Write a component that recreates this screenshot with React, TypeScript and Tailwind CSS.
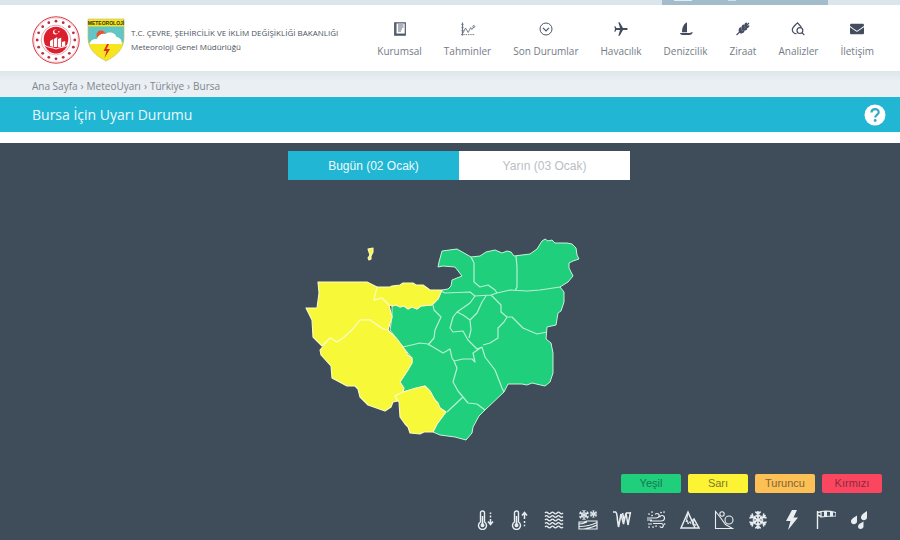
import React, { useState } from "react";
import { FaEnvelope } from "react-icons/fa";
import { MdAirplanemodeActive } from "react-icons/md";

const navIcon = "h-4 w-4";

function KurumsalIcon() {
  return (
    <svg viewBox="0 0 16 16" className={navIcon} fill="none" stroke="#4d5768">
      <path d="M2.700 1.800h10.600v12.400H2.700z" strokeWidth="1.200" />
      <path d="M3.800 2v12" strokeWidth="1.400" />
      <path d="M6 4h5.500M6 6h5.500M6 8h4M6 10h3" strokeWidth="0.900" />
      <path d="M3 13.300h10" strokeWidth="1.500" />
    </svg>
  );
}
function TahminIcon() {
  return (
    <svg viewBox="0 0 16 16" className={navIcon} fill="none" stroke="#6a7380" strokeWidth="0.900">
      <path d="M2.500 1.500v13" strokeWidth="1.200" />
      <path d="M1 13.600h14" strokeDasharray="1.500 0.800" />
      <path d="M1.500 3.500h2M1.500 6.500h2M1.500 9.500h2" />
      <path d="M3 12l2.500-5 2.700 4.500 2.500-5 1.200 2 1.800-2.500" />
      <circle cx="13.800" cy="5.500" r="1" />
    </svg>
  );
}
function DurumIcon() {
  return (
    <svg viewBox="0 0 16 16" className={navIcon} fill="none" stroke="#4d5768">
      <circle cx="8" cy="8" r="6" strokeWidth="1" />
      <path d="M5 6.800l3 3 3-3" strokeWidth="1.200" />
    </svg>
  );
}
function SailIcon() {
  return (
    <svg viewBox="0 0 16 16" className={navIcon} fill="#434d5e">
      <path d="M9 1.300v9.900H4C4 6.500 5.800 2.800 9 1.300z" />
      <path d="M1.800 12h9c1.200 0 2.200-.2 3.200-1l.8.500c-.8 1.700-2 2.500-3.800 2.500H4.500c-1.200 0-2.100-.7-2.700-2z" />
    </svg>
  );
}
function WheatIcon() {
  return (
    <svg viewBox="0 0 16 16" className={navIcon} fill="#434d5e">
      <path d="M1.500 14L14 2" stroke="#434d5e" strokeWidth="1.100" />
      <g>
        <ellipse cx="5" cy="8.600" rx="1.300" ry="2.500" transform="rotate(15 5 8.600)" />
        <ellipse cx="7.800" cy="5.900" rx="1.300" ry="2.500" transform="rotate(20 7.800 5.900)" />
        <ellipse cx="10.600" cy="3.600" rx="1.200" ry="2.300" transform="rotate(25 10.600 3.600)" />
        <ellipse cx="7" cy="11" rx="2.500" ry="1.300" transform="rotate(-15 7 11)" />
        <ellipse cx="9.800" cy="8.400" rx="2.500" ry="1.300" transform="rotate(-20 9.800 8.400)" />
        <ellipse cx="12.300" cy="5.800" rx="2.300" ry="1.200" transform="rotate(-25 12.300 5.800)" />
      </g>
    </svg>
  );
}
function AnalizIcon() {
  return (
    <svg viewBox="0 0 16 16" className={navIcon} fill="none" stroke="#434d5e" strokeWidth="1.200">
      <path d="M6.500 12.700C4 12.700 2.300 11 2.300 8.800 2.300 6 5 4.500 7.500 1.800c1.700 2 3.200 3.200 4 4.700" />
      <circle cx="9.900" cy="9.600" r="2.900" />
      <path d="M12 11.700l2.300 2.500" />
    </svg>
  );
}

const nav = [
  { label: "Kurumsal", icon: <KurumsalIcon /> },
  { label: "Tahminler", icon: <TahminIcon /> },
  { label: "Son Durumlar", icon: <DurumIcon /> },
  { label: "Havacılık", icon: <MdAirplanemodeActive className="h-4 w-4 rotate-90 text-[#434d5e]" /> },
  { label: "Denizcilik", icon: <SailIcon /> },
  { label: "Ziraat", icon: <WheatIcon /> },
  { label: "Analizler", icon: <AnalizIcon /> },
  { label: "İletişim", icon: <FaEnvelope className="h-4 w-3.5 text-[#434d5e]" /> },
];

const crumbs = ["Ana Sayfa", "MeteoUyarı", "Türkiye", "Bursa"];

const levels = [
  { label: "Yeşil", style: "bg-[#20cf7c] text-[#17774f]" },
  { label: "Sarı", style: "bg-[#fbf334] text-[#7d7a2c]" },
  { label: "Turuncu", style: "bg-[#fdc055] text-[#806537]" },
  { label: "Kırmızı", style: "bg-[#fb4660] text-[#8b2a40]" },
];

function MinistrySeal() {
  const stars = Array.from({ length: 16 }, (_, i) => {
    const a = (i * Math.PI) / 8;
    return { x: 24 + 18.800 * Math.sin(a), y: 24 - 18.800 * Math.cos(a) };
  });
  return (
    <svg viewBox="0 0 48 48" className="h-12 w-12" role="img" aria-label="Bakanlık arması">
      <circle cx="24" cy="24" r="23.200" fill="#fff" stroke="#d8323e" strokeWidth="1" />
      <circle cx="24" cy="24" r="22" fill="none" stroke="#e9a5aa" strokeWidth="0.500" />
      {stars.map((s, i) => (
        <circle key={i} cx={s.x} cy={s.y} r="1.400" fill="#b9303f" />
      ))}
      <circle cx="24" cy="24" r="14.800" fill="#fff" stroke="#e58088" strokeWidth="0.700" />
      <circle cx="24" cy="23" r="12.300" fill="#dc1f2d" />
      <circle cx="23.500" cy="16" r="2.500" fill="#fff" />
      <circle cx="24.400" cy="15.600" r="2.100" fill="#dc1f2d" />
      <circle cx="26.800" cy="15.800" r="0.700" fill="#fff" />
      <path d="M18 25l3.200-2v8L18 30zM22 23l3.200-2v10H22zM26 23l3.200-1.500V31H26zM30 26l3.200-1v5L30 31z" fill="#fff" />
      <path d="M12 29c4 3 8 2 12 4 4-2 8-1 12-4-3 7-8 9-12 9s-9-2-12-9z" fill="#dc1f2d" stroke="#fff" strokeWidth="0.900" />
    </svg>
  );
}

function MeteorologyShield() {
  return (
    <svg viewBox="0 0 38 44" className="h-11 w-[38px]" role="img" aria-label="Meteoroloji arması">
      <defs>
        <clipPath id="shield">
          <path d="M1 1h36v19c0 11-8 18-18 23C9 38 1 31 1 20z" />
        </clipPath>
      </defs>
      <g clipPath="url(#shield)">
        <rect width="38" height="44" fill="#f7e520" />
        <rect y="8.500" width="38" height="16" fill="#62c5c6" />
        <circle cx="14" cy="17" r="4.500" fill="#e8542c" />
        <path d="M3 26c0-4 4-5.500 7-5 1-4 5-6 8.500-5 4-3 10-1 11 3 4 .5 6 4 5 7z" fill="#fff" />
      </g>
      <path d="M1 1h36v19c0 11-8 18-18 23C9 38 1 31 1 20z" fill="none" stroke="#c9c06a" strokeWidth="0.700" />
      <path d="M20 26l-3.500 7h3L17.500 40l5.500-9h-3.500l2.500-5z" fill="#d92d22" />
      <text x="19" y="7" textAnchor="middle" fontSize="5" fontWeight="700" fill="#303018" fontFamily="'Liberation Sans', sans-serif">METEOROLOJİ</text>
    </svg>
  );
}

const yellowAreas = [
  "M318 282L367 282 377 287 374 300 382 298 389 305 392 317 388 330 383 329 370 320 360 320 352 330 343 338 337 342 330 338 322 346 313 337 312 320 306 308 317 308 319 293z",
  "M320 350L330 338 337 342 343 338 352 330 360 320 370 320 383 329 388 330 397 339 403 347 408 355 412 358 412 363 408 370 400 382 404 388 403 392 395 396 398 401 393 402 391 407 385 411 368 405 360 397 358 389 355 386 347 386 332 378 331 366 321 355z",
  "M395 396L403 392 416 388 425 386 430 391 435 400 438 403 440 408 446 412 437 424 433 432 424 432 420 434 410 433 408 427 405 424 400 417 399 402z",
  "M377 287L390 287 392 286 400 285 403 283 413 283 416 285 423 285 430 290 442 290 438 299 432 305 421 306 417 309 412 307 408 309 404 306 400 307 396 305 392 306 389 305 382 298 374 300z",
  "M368 249L373 248 373 252 371 256 371 259 369 260 368 258 370 255z",
];
const greenArea =
  "M442 290L448 289 451 286 452 280 462 276 455 267 443 266 438 267 439 262 442 251 457 249 471 257 480 256 486 252 495 250 502 253 507 251 511 252 514 256 530 254 537 249 542 241 545 239 548 241 552 240 555 243 567 243 572 244 576 248 577 255 579 259 573 261 569 263 569 268 573 276 568 282 560 287 564 292 564 302 561 311 558 313 556 325 547 327 546 339 551 343 553 353 553 373 550 382 545 386 532 383 527 385 522 384 508 384 504 392 485 410 479 416 473 427 472 433 466 440 455 437 440 435 433 432 437 424 446 412 440 408 435 400 430 391 425 386 403 392 400 382 412 363 412 358 403 347 390 330 392 317 392 306 396 305 400 307 404 306 408 309 412 307 417 309 421 306 432 305 438 299z";
const borders =
  "M471 257L474 263 474 282 480 287 488 285 495 290 497 293M516 256L517 267 517 287 515 291M441 291L445 293 470 292 475 296 491 295 497 293 510 290 527 291 540 290 560 287M475 296L470 303 457 312 453 317 450 328 453 332 463 331 468 340 477 349 482 347M457 312L463 315 470 320 471 330 469 338M470 320L477 313 482 302 486 296M491 295L501 305 501 312 507 317 512 317 523 328 537 334 547 332M507 317L504 322 498 328 498 338 490 343 483 345M433 305L434 310 441 317 435 330 434 338 428 345M403 347L420 343 428 344 443 353 450 349 452 358 454 361 463 359 472 359 475 362 473 353 482 347M454 361L457 368 453 382 458 391 463 397 447 412M463 397L468 403 477 404 485 410M482 347L485 357 495 370 502 388 504 392";

function BursaMap() {
  return (
    <svg viewBox="305 235 290 210" className="h-[210px] w-[290px]" role="img" aria-label="Bursa uyarı haritası" strokeLinejoin="round">
      <path d={greenArea} fill="#20cf7c" stroke="#c5f4dc" strokeWidth="1" />
      <path d={borders} fill="none" stroke="#b5f0d2" strokeWidth="1.200" />
      {yellowAreas.map((d) => (
        <path key={d} d={d} fill="#f7f838" stroke="#fdfcc0" strokeWidth="1.100" />
      ))}
    </svg>
  );
}

function Thermometer({ up }: { up?: boolean }) {
  return (
    <g>
      <path d="M4.500 12V3a2 2 0 0 1 4 0v9a4 4 0 1 1-4 0z" />
      <path d="M6.500 6v8" strokeWidth="1.600" />
      <circle cx="6.500" cy="15.300" r="1.300" fill="currentColor" />
      {up ? (
        <path d="M14.500 4v5M14.500 11v2M14.500 14.800v1.500M12 5.500L14.500 2.500 17 5.500" strokeWidth="1.500" />
      ) : (
        <path d="M14.500 2.500V4M14.500 5.500v2M14.500 9v5M12 11.500l2.500 3 2.500-3" strokeWidth="1.500" />
      )}
    </g>
  );
}

const snowArm = "M0 0V-8.500M-2.500-8L0-5.500 2.500-8M-2-4.700L0-2.700 2-4.700";

function Flake({ x, y, scale, width }: { x: number; y: number; scale: number; width: number }) {
  return (
    <g transform={`translate(${x} ${y}) scale(${scale})`} strokeWidth={width}>
      {[0, 60, 120, 180, 240, 300].map((a) => (
        <path key={a} d={snowArm} transform={`rotate(${a})`} />
      ))}
    </g>
  );
}

const hazards: { name: string; art: React.ReactNode }[] = [
  { name: "Soğuk", art: <Thermometer /> },
  { name: "Sıcak", art: <Thermometer up /> },
  {
    name: "Sel",
    art: (
      <g strokeWidth="1.300">
        {[3, 6.500, 10, 13.500, 17].map((y) => (
          <path key={y} d={`M1 ${y}q1.500-1.800 3 0t3 0 3 0 3 0 3 0 3 0`} />
        ))}
      </g>
    ),
  },
  {
    name: "Zirai don",
    art: (
      <g strokeWidth="1.200">
        <Flake x={6} y={5} scale={0.600} width={1.600} />
        <Flake x={15.500} y={4} scale={0.430} width={1.900} />
        <path d="M1 12h5l3-1h10v8H1zM1 16.500c7 0 12-1 18-4M6 19c5-1 9-2 13-4M1 14c3 0 5-.5 8-2" />
      </g>
    ),
  },
  {
    name: "Buzlanma",
    art: (
      <g strokeWidth="1.600">
        <path d="M1 2h2.500q1.500.5 2 8L6.500 17 9 4" />
        <path d="M9 4l2.500 10L14 3l2 12L18.500 2M10.500 3l2 8M14 3h5" strokeWidth="1.500" />
      </g>
    ),
  },
  {
    name: "Toz",
    art: (
      <g strokeWidth="1.200">
        <path d="M1 8h9c4 0 4-4.500 1-4.500-1 0-1.500.5-1.700 1M4 11h11c4.500 0 4.500-5.500 1-5.500-1.300 0-2 .8-2 1.800M1 10h5M7 13.500h8c3 0 3 4 .5 4-1 0-1.500-.5-1.500-1.200M2 14h4" />
        <path d="M3 4h.1M6 2h.1M6 5.500h.1M15 2.500h.1M18 2h.1M3 17h.1M7 17h.1M10 16h.1M18.500 14h.1" strokeWidth="1.700" strokeLinecap="round" />
      </g>
    ),
  },
  {
    name: "Çığ",
    art: (
      <g strokeWidth="1.500">
        <path d="M1 18L8 2l4 9 2-2 5 9zM12 11l3 7" />
        <path d="M8 4L6 12l1.500-1.500L8 14l2-2.500 1 2.500M14 10l-1 5 2-1 1 2" strokeWidth="1" />
      </g>
    ),
  },
  {
    name: "Toprak kayması",
    art: (
      <g strokeWidth="1.100">
        <path d="M1.500 1.500V18.500H18.500L11.500 14.500 6 7z" />
        <circle cx="8" cy="4" r="2.200" />
        <circle cx="15" cy="10" r="4" />
      </g>
    ),
  },
  { name: "Kar", art: <Flake x={10} y={10} scale={1.050} width={1.500} /> },
  { name: "Gök gürültülü sağanak", art: <path d="M10 0L4 11h4.500L6 20 16 7.500h-4.500L15 0z" fill="currentColor" stroke="none" /> },
  {
    name: "Rüzgâr",
    art: (
      <g>
        <path d="M1.500 1v18M2 2.500l3-.8M2 5l3 1.500" strokeWidth="1.400" />
        <path d="M5 1.500q7-1 15 1v3.500q-8 0-15 1z" strokeWidth="1.200" />
        <path d="M8 1v6l3-.5V1zM14 1.500v5l3-.2V2z" fill="currentColor" stroke="none" />
      </g>
    ),
  },
  {
    name: "Yağmur",
    art: (
      <g fill="currentColor" stroke="none">
        <path d="M17 1c-3 2-6 3.800-6 6.500 0 3.700 5.700 3.700 6 0z" />
        <path d="M7 5.500C4 7.500 1 9 1 11.500c0 3.500 5.700 3.700 6 0z" />
        <path d="M13.500 11.500c-3 1.800-5.500 2.800-5.500 5 0 3.500 5.500 3.200 5.500 0z" />
      </g>
    ),
  },
];

export default function App() {
  const [day, setDay] = useState(0);
  const tabs = ["Bugün (02 Ocak)", "Yarın (03 Ocak)"];
  return (
    <div className="flex min-h-screen flex-col bg-[#3f4c5a] font-['Open_Sans','Noto_Sans',sans-serif]">
      <div className="flex h-[5px] justify-end bg-[#dbe6ec] pr-[72px]">
        <div className="flex w-[166px] gap-9 bg-[#a2bccb] pl-3">
          <span className="h-px w-[18px] bg-[#e4ecf0]" />
          <span className="h-px w-2 bg-[#d2dfe6]" />
        </div>
      </div>
      <header className="flex h-[66px] items-center justify-between bg-white pt-1 pr-[26px] pl-8">
        <a href="#" className="flex items-center text-[#4c5462]">
          <MinistrySeal />
          <span className="ml-[7px]"><MeteorologyShield /></span>
          <span className="ml-[6px] flex flex-col text-[8px] leading-[14px] whitespace-nowrap">
            <span>T.C. ÇEVRE, ŞEHİRCİLİK VE İKLİM DEĞİŞİKLİĞİ BAKANLIĞI</span>
            <span>Meteoroloji Genel Müdürlüğü</span>
          </span>
        </a>
        <nav className="flex gap-[22px]">
          {nav.map((n) => (
            <a key={n.label} href="#" className="flex flex-col items-center gap-[6px] text-[10px] leading-4 whitespace-nowrap text-[#737b86]">
              {n.icon}
              {n.label}
            </a>
          ))}
        </nav>
      </header>
      <nav className="h-[26px] bg-linear-to-b from-[#dfe6eb] to-[#e9eff3] to-40% pt-[7px] pl-8" aria-label="Sayfa yolu">
        <ol className="flex text-[10px] leading-4 text-[#7f868f]">
          {crumbs.map((c, i) => (
            <li key={c}>
              {i > 0 && <span className="px-[3px]">›</span>}
              <a href="#">{c}</a>
            </li>
          ))}
        </ol>
      </nav>
      <div className="flex h-[35px] items-center justify-between bg-[#20b6d4] pr-[14px] pl-8">
        <h1 className="text-[14px] leading-5 text-[#e9fafd]">Bursa İçin Uyarı Durumu</h1>
        <button type="button" aria-label="Yardım" className="h-[22px] w-[22px]">
          <svg viewBox="0 0 22 22" className="h-full w-full">
            <circle cx="11" cy="11" r="10.500" fill="#fff" />
            <path d="M7.500 8.500c0-4.500 7.200-4.300 7.200-.3 0 2.600-3.500 2.700-3.500 5.300" fill="none" stroke="#35a9c2" strokeWidth="2.200" />
            <circle cx="11.200" cy="16.500" r="1.400" fill="#35a9c2" />
          </svg>
        </button>
      </div>
      <div className="h-[11px] bg-white" />
      <main className="flex flex-col pt-2 font-['Liberation_Sans',Arial,sans-serif]">
        <div className="flex justify-center pl-[18px]">
          <div role="tablist" className="grid w-[342px] grid-cols-2">
            {tabs.map((t, i) => (
              <button
                key={t}
                type="button"
                role="tab"
                aria-selected={day === i}
                onClick={() => setDay(i)}
                className={day === i ? "h-[29px] bg-[#20b6d4] text-[12px] text-[#effbfd]" : "h-[29px] bg-white text-[12px] text-[#b9bec2]"}
              >
                {t}
              </button>
            ))}
          </div>
        </div>
        <div className="mt-[55px] flex justify-center">
          <BursaMap />
        </div>
        <ul className="mt-[29px] mr-[18px] flex justify-end gap-[7px]">
          {levels.map((l) => (
            <li key={l.label} className={`${l.style} h-[19px] w-[60px] rounded-xs text-center text-[11px] leading-[19px]`}>
              {l.label}
            </li>
          ))}
        </ul>
        <ul className="mt-[17px] mr-[30px] mb-2 flex justify-end gap-[14px] text-[#e8edf1]">
          {hazards.map((h) => (
            <li key={h.name}>
              <svg viewBox="0 0 20 20" className="h-5 w-5" role="img" aria-label={h.name} fill="none" stroke="currentColor" strokeWidth="1.400">
                {h.art}
              </svg>
            </li>
          ))}
        </ul>
      </main>
    </div>
  );
}
